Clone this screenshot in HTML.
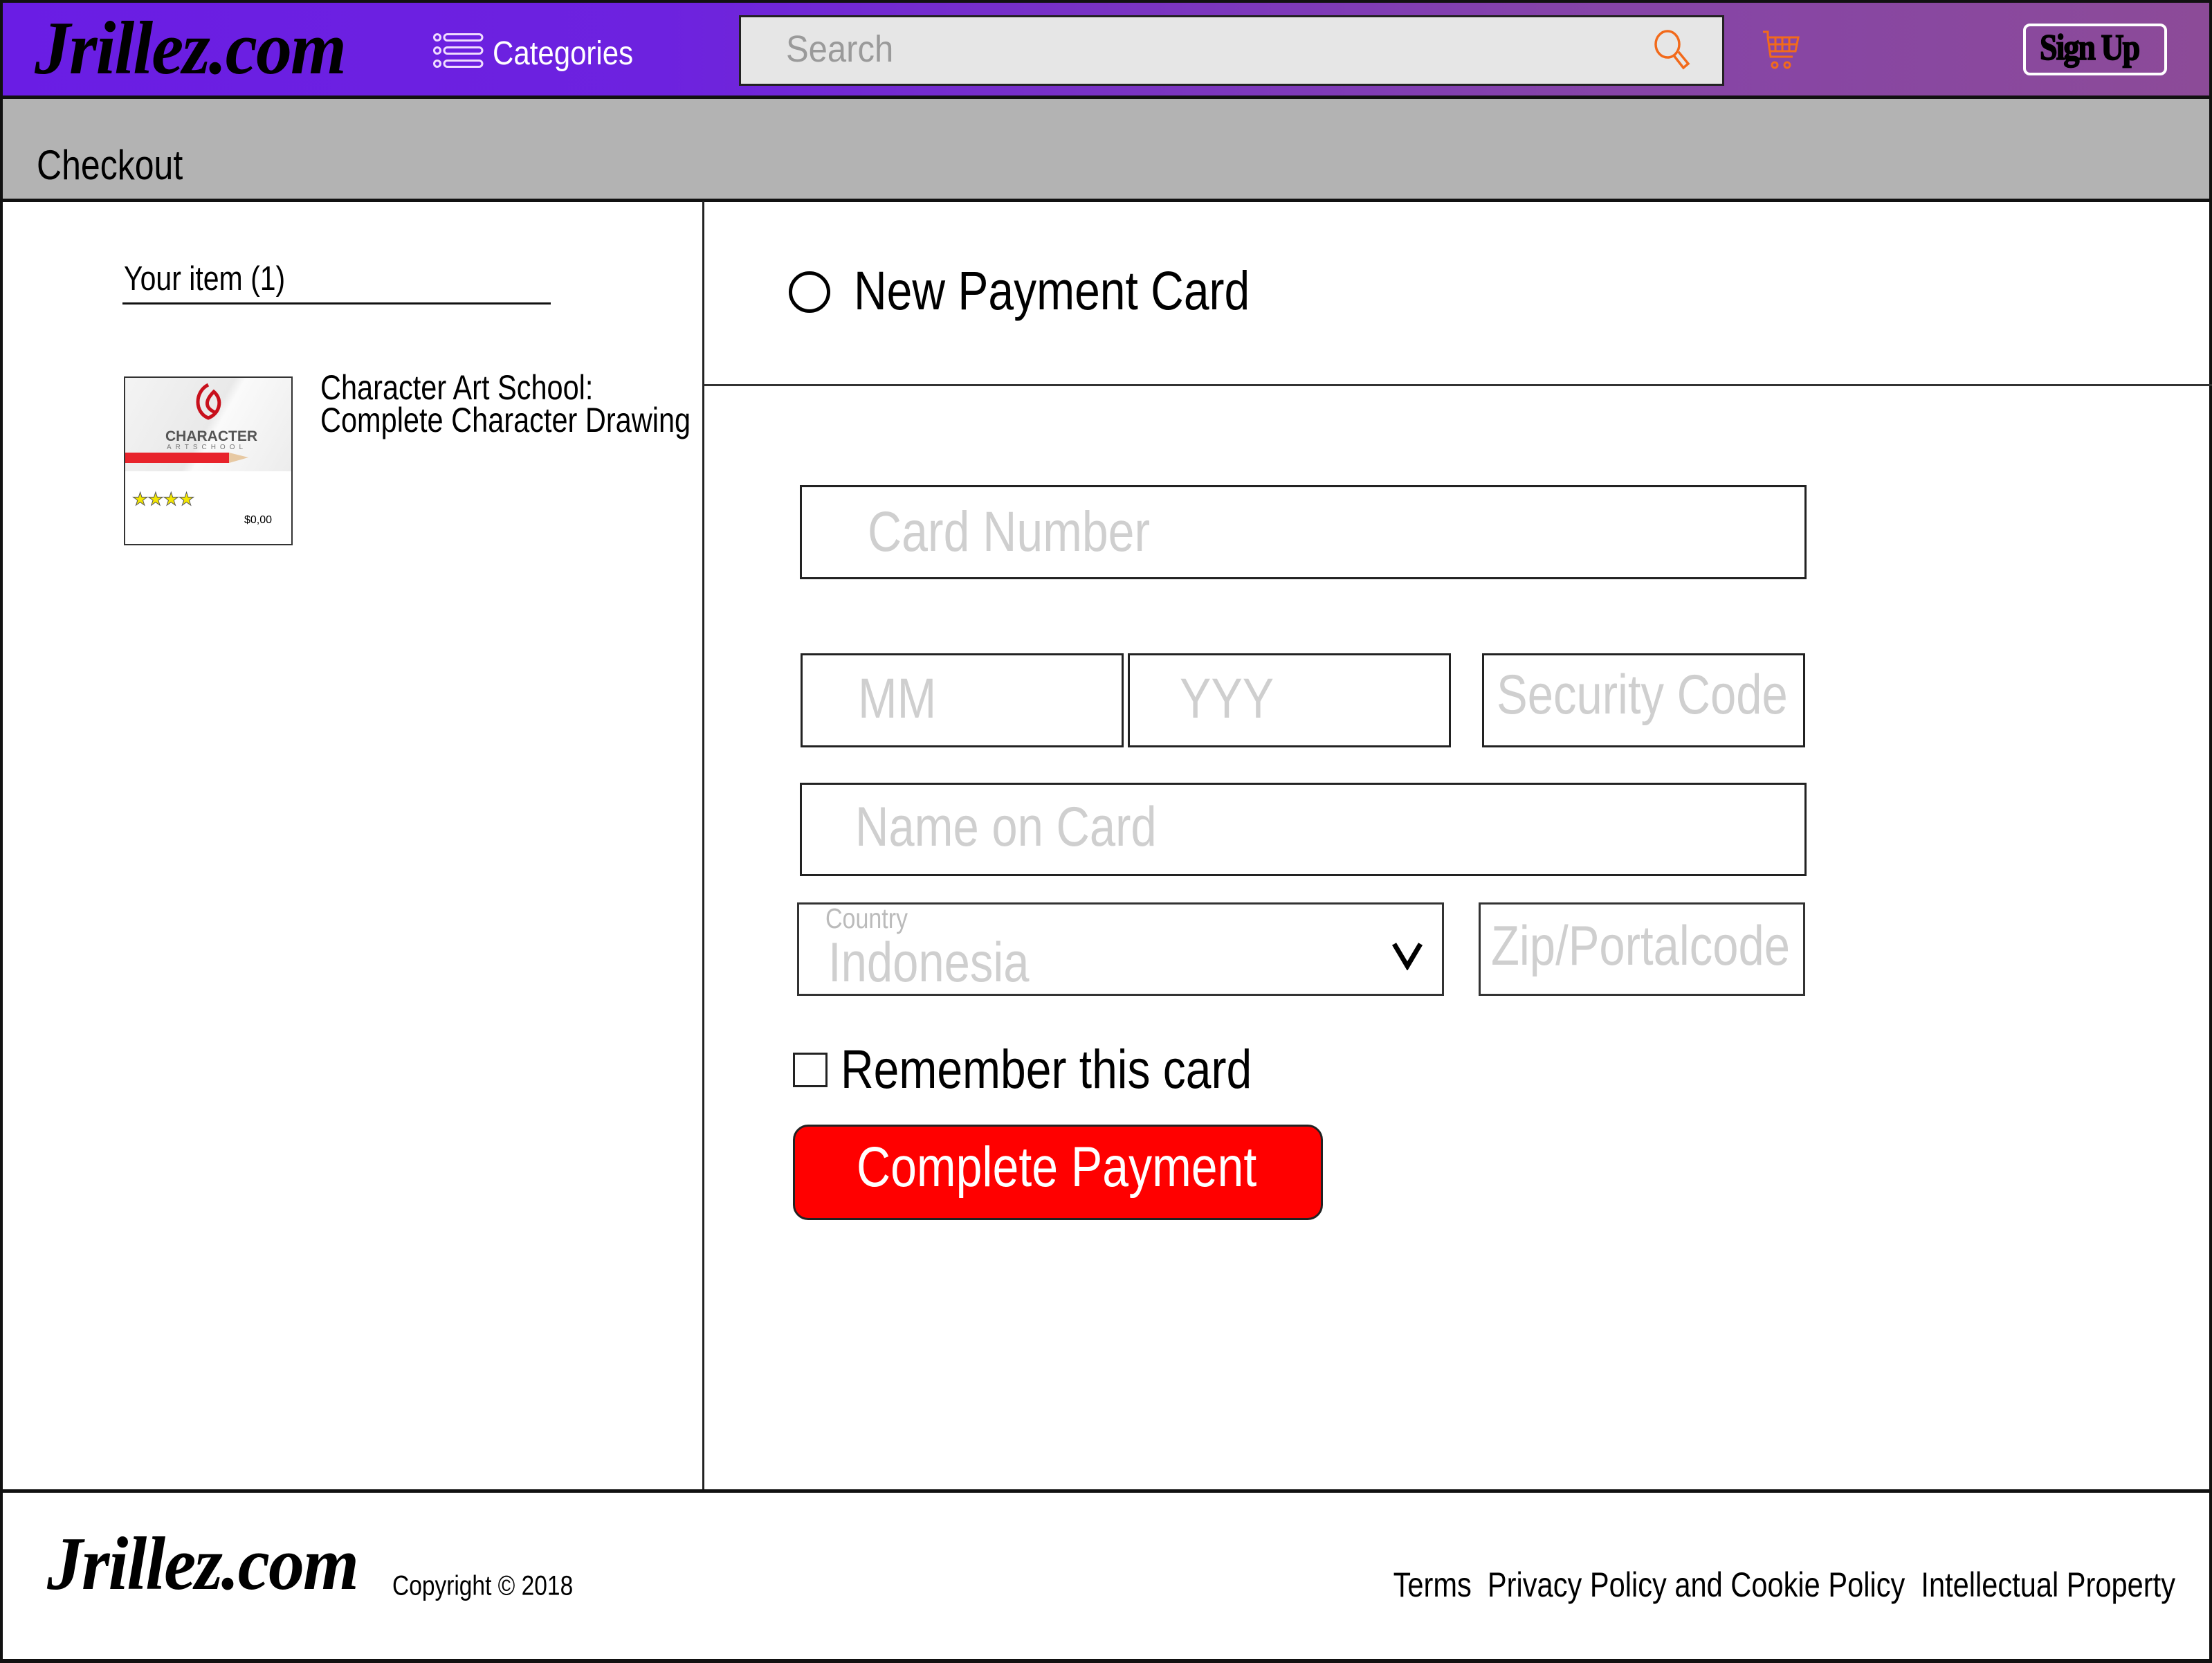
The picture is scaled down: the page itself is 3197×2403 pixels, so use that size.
<!DOCTYPE html>
<html><head><meta charset="utf-8"><style>
*{margin:0;padding:0;box-sizing:border-box}
body{width:3197px;height:2403px;position:relative;overflow:hidden;background:#fff;font-family:"Liberation Sans",Arial,sans-serif;color:#000}
.a{position:absolute}
.t{position:absolute;line-height:1;white-space:nowrap}
.s{display:inline-block;transform:scaleY(1.2);transform-origin:0 85%}
.box{position:absolute;border:3px solid #222;background:#fff}
.ph{color:#cfcfcf}
.logo{position:absolute;font-family:"Liberation Serif",serif;font-style:italic;font-weight:bold;line-height:1;white-space:nowrap;letter-spacing:-2px}
</style></head><body>
<div class="a" style="left:0;top:0;width:3197px;height:143px;background:linear-gradient(90deg,#6a1de4 0%,#6d22df 30%,#8543aa 70%,#8c4b98 100%);border:4px solid #111;border-bottom:5px solid #111"></div>
<div class="logo" style="left:50px;top:20px;font-size:104px"><span class="s" style="transform:scaleY(1.05)">Jrillez.com</span></div>
<svg class="a" style="left:626px;top:48px" width="74" height="50" viewBox="0 0 74 50" fill="none" stroke="#f0dcff" stroke-width="3">
<circle cx="6" cy="6" r="4.5"/><circle cx="6" cy="25" r="4.5"/><circle cx="6" cy="44" r="4.5"/>
<rect x="16" y="1.5" width="55" height="9" rx="4.5"/><rect x="16" y="20.5" width="55" height="9" rx="4.5"/><rect x="16" y="39.5" width="55" height="9" rx="4.5"/></svg>
<div class="t" style="left:712px;top:58px;font-size:42px;color:#fff"><span class="s" style="transform:scaleY(1.15)">Categories</span></div>
<div class="a" style="left:1068px;top:22px;width:1424px;height:102px;background:#e6e6e6;border:3px solid #222"></div>
<div class="t" style="left:1136px;top:49px;font-size:49px;color:#9a9a9a"><span class="s" style="transform:scaleY(1.1)">Search</span></div>
<svg class="a" style="left:2388px;top:42px" width="58" height="60" viewBox="0 0 58 60" fill="none" stroke="#f26a1b" stroke-width="3.5">
<ellipse cx="22" cy="22" rx="17" ry="19"/><path d="M31 38 L45 56 L52 50 L38 33"/></svg>
<svg class="a" style="left:2545px;top:42px" width="60" height="60" viewBox="0 0 60 60" fill="none" stroke="#f26a1b" stroke-width="3">
<path d="M3 4 L10 4 L10 12 L14 40 L46 40"/><path d="M10 12 L54 12 L50 32 L13 32"/>
<path d="M21 12 V32 M31 12 V32 M41 12 V32 M11 22 H52"/><circle cx="20" cy="52" r="4"/><circle cx="38" cy="52" r="4"/></svg>
<div class="a" style="left:2924px;top:34px;width:208px;height:75px;border:4px solid #fff;border-radius:10px"></div>
<div class="t" style="left:2948px;top:48px;font-size:46px;font-family:'Liberation Serif',serif;font-weight:900;letter-spacing:-2px"><span class="s" style="transform:scaleY(1.15);-webkit-text-stroke:1.5px #000">Sign Up</span></div>
<div class="a" style="left:0;top:143px;width:3197px;height:149px;background:#b3b3b3;border-left:4px solid #111;border-right:4px solid #111;border-bottom:5px solid #111"></div>
<div class="t" style="left:53px;top:217px;font-size:50px"><span class="s">Checkout</span></div>
<div class="a" style="left:0;top:290px;width:4px;height:2113px;background:#111"></div>
<div class="a" style="left:3193px;top:290px;width:4px;height:2113px;background:#111"></div>
<div class="a" style="left:1015px;top:290px;width:3px;height:1865px;background:#222"></div>
<div class="a" style="left:1017px;top:555px;width:2180px;height:3px;background:#333"></div>
<div class="a" style="left:0;top:2152px;width:3197px;height:5px;background:#111"></div>
<div class="a" style="left:0;top:2397px;width:3197px;height:6px;background:#111"></div>
<div class="t" style="left:179px;top:385px;font-size:41px"><span class="s">Your item (1)</span></div>
<div class="a" style="left:177px;top:437px;width:619px;height:3px;background:#111"></div>
<div class="a" style="left:179px;top:544px;width:244px;height:244px;border:2px solid #333;background:#fff;overflow:hidden">
 <div class="a" style="left:0;top:0;width:240px;height:135px;background:linear-gradient(120deg,#f4f4f4,#e9e9e9 50%,#fafafa 55%,#ececec)"></div>
 <svg class="a" style="left:90px;top:6px" width="60" height="60" viewBox="0 0 60 60" fill="none" stroke="#c8101c" stroke-width="5"><path d="M30 4 C10 14 10 44 30 52 C46 46 52 26 38 14 C28 24 22 36 40 44"/></svg>
 <div class="t" style="left:58px;top:74px;font-size:21px;font-weight:bold;color:#555">CHARACTER</div>
 <div class="t" style="left:60px;top:96px;font-size:10px;letter-spacing:6px;color:#777">ARTSCHOOL</div>
 <div class="a" style="left:0;top:108px;width:150px;height:15px;background:#e8232b"></div>
 <div class="a" style="left:150px;top:108px;width:0;height:0;border-top:7px solid transparent;border-bottom:8px solid transparent;border-left:28px solid #e7c9a3"></div>
 <div class="t" style="left:10px;top:162px;font-size:26px;color:#f4e700;-webkit-text-stroke:1px #555;letter-spacing:-1px">★★★★</div>
 <div class="t" style="left:172px;top:198px;font-size:16px">$0,00</div>
</div>
<div class="t" style="left:463px;top:542px;font-size:41.5px"><span class="s">Character Art School:</span></div>
<div class="t" style="left:463px;top:589px;font-size:41.5px"><span class="s">Complete Character Drawing</span></div>
<div class="a" style="left:1140px;top:392px;width:60px;height:60px;border:5px solid #000;border-radius:50%"></div>
<div class="t" style="left:1234px;top:391px;font-size:66px"><span class="s">New Payment Card</span></div>
<div class="box" style="left:1156px;top:701px;width:1455px;height:136px"></div>
<div class="t ph" style="left:1254px;top:739px;font-size:68px"><span class="s">Card Number</span></div>
<div class="box" style="left:1157px;top:944px;width:467px;height:136px"></div>
<div class="box" style="left:1630px;top:944px;width:467px;height:136px"></div>
<div class="box" style="left:2142px;top:944px;width:467px;height:136px"></div>
<div class="t ph" style="left:1240px;top:980px;font-size:68px"><span class="s">MM</span></div>
<div class="t ph" style="left:1705px;top:980px;font-size:68px"><span class="s">YYY</span></div>
<div class="t ph" style="left:2163px;top:975px;font-size:67px"><span class="s">Security Code</span></div>
<div class="box" style="left:1156px;top:1131px;width:1455px;height:135px"></div>
<div class="t ph" style="left:1236px;top:1166px;font-size:67px"><span class="s">Name on Card</span></div>
<div class="box" style="left:1152px;top:1304px;width:935px;height:135px;border-color:#333"></div>
<div class="t ph" style="left:1193px;top:1313px;font-size:34px;color:#bbb"><span class="s">Country</span></div>
<div class="t ph" style="left:1197px;top:1362px;font-size:67px"><span class="s">Indonesia</span></div>
<svg class="a" style="left:2010px;top:1360px" width="48" height="42" viewBox="0 0 48 42" fill="none" stroke="#000" stroke-width="7"><path d="M5 4 L24 36 L43 4"/></svg>
<div class="box" style="left:2137px;top:1304px;width:472px;height:135px;border-color:#333"></div>
<div class="t ph" style="left:2155px;top:1338px;font-size:67px"><span class="s">Zip/Portalcode</span></div>
<div class="a" style="left:1146px;top:1521px;width:50px;height:50px;border:3px solid #222;background:#fff"></div>
<div class="t" style="left:1215px;top:1516px;font-size:66px"><span class="s">Remember this card</span></div>
<div class="a" style="left:1146px;top:1625px;width:766px;height:138px;background:#ff0000;border:3px solid #222;border-radius:22px"></div>
<div class="t" style="left:1238px;top:1657px;font-size:68px;color:#fff"><span class="s">Complete Payment</span></div>
<div class="logo" style="left:68px;top:2210px;font-size:104px"><span class="s" style="transform:scaleY(1.05)">Jrillez.com</span></div>
<div class="t" style="left:567px;top:2278px;font-size:33.5px"><span class="s">Copyright © 2018</span></div>
<div class="t" style="right:53px;top:2272px;font-size:41.6px"><span class="s">Terms&nbsp; Privacy Policy and Cookie Policy&nbsp; Intellectual Property</span></div>
</body></html>
